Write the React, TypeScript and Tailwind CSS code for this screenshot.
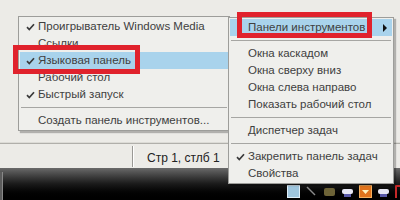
import type { ReactNode } from "react";

type Item =
  | { kind: "item"; label: string; checked?: boolean; active?: boolean; submenu?: boolean }
  | { kind: "sep" };

const leftItems: Item[] = [
  { kind: "item", label: "Проигрыватель Windows Media", checked: true },
  { kind: "item", label: "Ссылки" },
  { kind: "item", label: "Языковая панель", checked: true, active: true },
  { kind: "item", label: "Рабочий стол" },
  { kind: "item", label: "Быстрый запуск", checked: true },
  { kind: "sep" },
  { kind: "item", label: "Создать панель инструментов..." },
];

const rightItems: Item[] = [
  { kind: "item", label: "Панели инструментов", active: true, submenu: true },
  { kind: "sep" },
  { kind: "item", label: "Окна каскадом" },
  { kind: "item", label: "Окна сверху вниз" },
  { kind: "item", label: "Окна слева направо" },
  { kind: "item", label: "Показать рабочий стол" },
  { kind: "sep" },
  { kind: "item", label: "Диспетчер задач" },
  { kind: "sep" },
  { kind: "item", label: "Закрепить панель задач", checked: true },
  { kind: "item", label: "Свойства" },
];

function Check() {
  return (
    <svg width="9" height="8" viewBox="0 0 9 8" className="absolute left-[6px] top-[5px]">
      <path d="M1 4.2 L3.3 6.5 L8 1.3" fill="none" stroke="#3a3a3a" strokeWidth="1.7" />
    </svg>
  );
}

function Menu({ items, className }: { items: Item[]; className: string }) {
  return (
    <div
      className={`absolute border border-[#9d9d9a] bg-[#efefec] py-[1px] px-[1px] shadow-[2px_2px_1px_rgba(0,0,0,0.25)] ${className}`}
    >
      {items.map((it, i) =>
        it.kind === "sep" ? (
          <div key={i} className="flex h-[9px] items-center px-[1px]">
            <div className="h-[2px] w-full border-t border-[#a6a6a3] border-b-white" />
          </div>
        ) : (
          <div
            key={i}
            className={`relative flex h-[17px] items-center pl-[18px] pr-2 ${it.active ? "bg-[#a9d3ec]" : ""}`}
          >
            {it.checked && <Check />}
            <span className="whitespace-nowrap">{it.label}</span>
            {it.submenu && (
              <svg width="4" height="8" viewBox="0 0 4 8" className="absolute right-[5px] top-[5px]">
                <path d="M0 0 L4 4 L0 8 Z" fill="#111" />
              </svg>
            )}
          </div>
        )
      )}
    </div>
  );
}

function Tray({ children, className }: { children: ReactNode; className?: string }) {
  return <div className={`h-[13px] w-[13px] ${className ?? ""}`}>{children}</div>;
}

export default function App() {
  return (
    <div
      className="relative h-[200px] w-[400px] overflow-hidden text-[11.5px] text-[#404040]"
      style={{ fontFamily: '"Liberation Sans", "DejaVu Sans", sans-serif' }}
    >
      <div className="flex h-full flex-col">
        <div className="flex-1 bg-[#ecebe7] border-b border-[#dcdbd6]" />
        <div className="flex h-[25px] items-center border-t border-[#b0afaa] bg-[#ecebe7]">
          <div className="h-[21px] w-[133px] border-r border-[#9a9995]" />
          <div className="w-[1px] h-[21px] bg-white" />
          <span className="ml-[13px] pt-[3px] text-[12px] text-[#222]">Стр 1, стлб 1</span>
        </div>
        <div className="relative flex h-[32px] items-end justify-end bg-gradient-to-b from-[#6a6a6a] via-[#1a1a1a] to-black pb-[1px]">
          <div className="absolute left-0 top-[4px] h-[28px] w-[3px] bg-[#5c5c5c] border-r border-[#888]" />
          <div className="mb-[1px] flex items-end gap-[5px]">
            <Tray className="bg-[#9fc6de] border border-[#dfeef8]" />
            <Tray>
              <svg width="13" height="13" viewBox="0 0 13 13">
                <path d="M2 2 L10 10" stroke="#8a8a8a" strokeWidth="1.5" />
              </svg>
            </Tray>
            <Tray>
              <svg width="13" height="13" viewBox="0 0 13 13">
                <rect x="1" y="3" width="11" height="8" rx="2" fill="#6d6337" />
              </svg>
            </Tray>
            <Tray>
              <svg width="13" height="13" viewBox="0 0 13 13">
                <rect x="1" y="4" width="11" height="5" rx="2" fill="#e8e8f4" />
                <rect x="3" y="9" width="7" height="3" fill="#5a5aa8" />
              </svg>
            </Tray>
            <Tray className="bg-[#e0731c] border border-[#f4b060]">
              <svg width="11" height="11" viewBox="0 0 11 11">
                <path d="M2 4 L5.5 8 L9 4 Z" fill="#fff2c0" />
              </svg>
            </Tray>
            <Tray>
              <svg width="13" height="13" viewBox="0 0 13 13">
                <rect x="1" y="4" width="11" height="5" rx="2" fill="#e8e8f4" />
                <rect x="3" y="9" width="7" height="3" fill="#5a5aa8" />
              </svg>
            </Tray>
            <div className="h-[13px] w-[5px] border-l-2 border-t-2 border-[#c42828]" />
          </div>
        </div>
      </div>

      <Menu items={leftItems} className="left-[18px] top-[16px] w-[212px]" />
      <Menu items={rightItems} className="left-[228px] top-[17px] w-[166px]" />

      <div className="absolute left-[13px] top-[45px] h-[29px] w-[127px] border-[5px] border-[#e0222c]" />
      <div className="absolute left-[237px] top-[12px] h-[26px] w-[135px] border-[5px] border-[#e0222c]" />
    </div>
  );
}
